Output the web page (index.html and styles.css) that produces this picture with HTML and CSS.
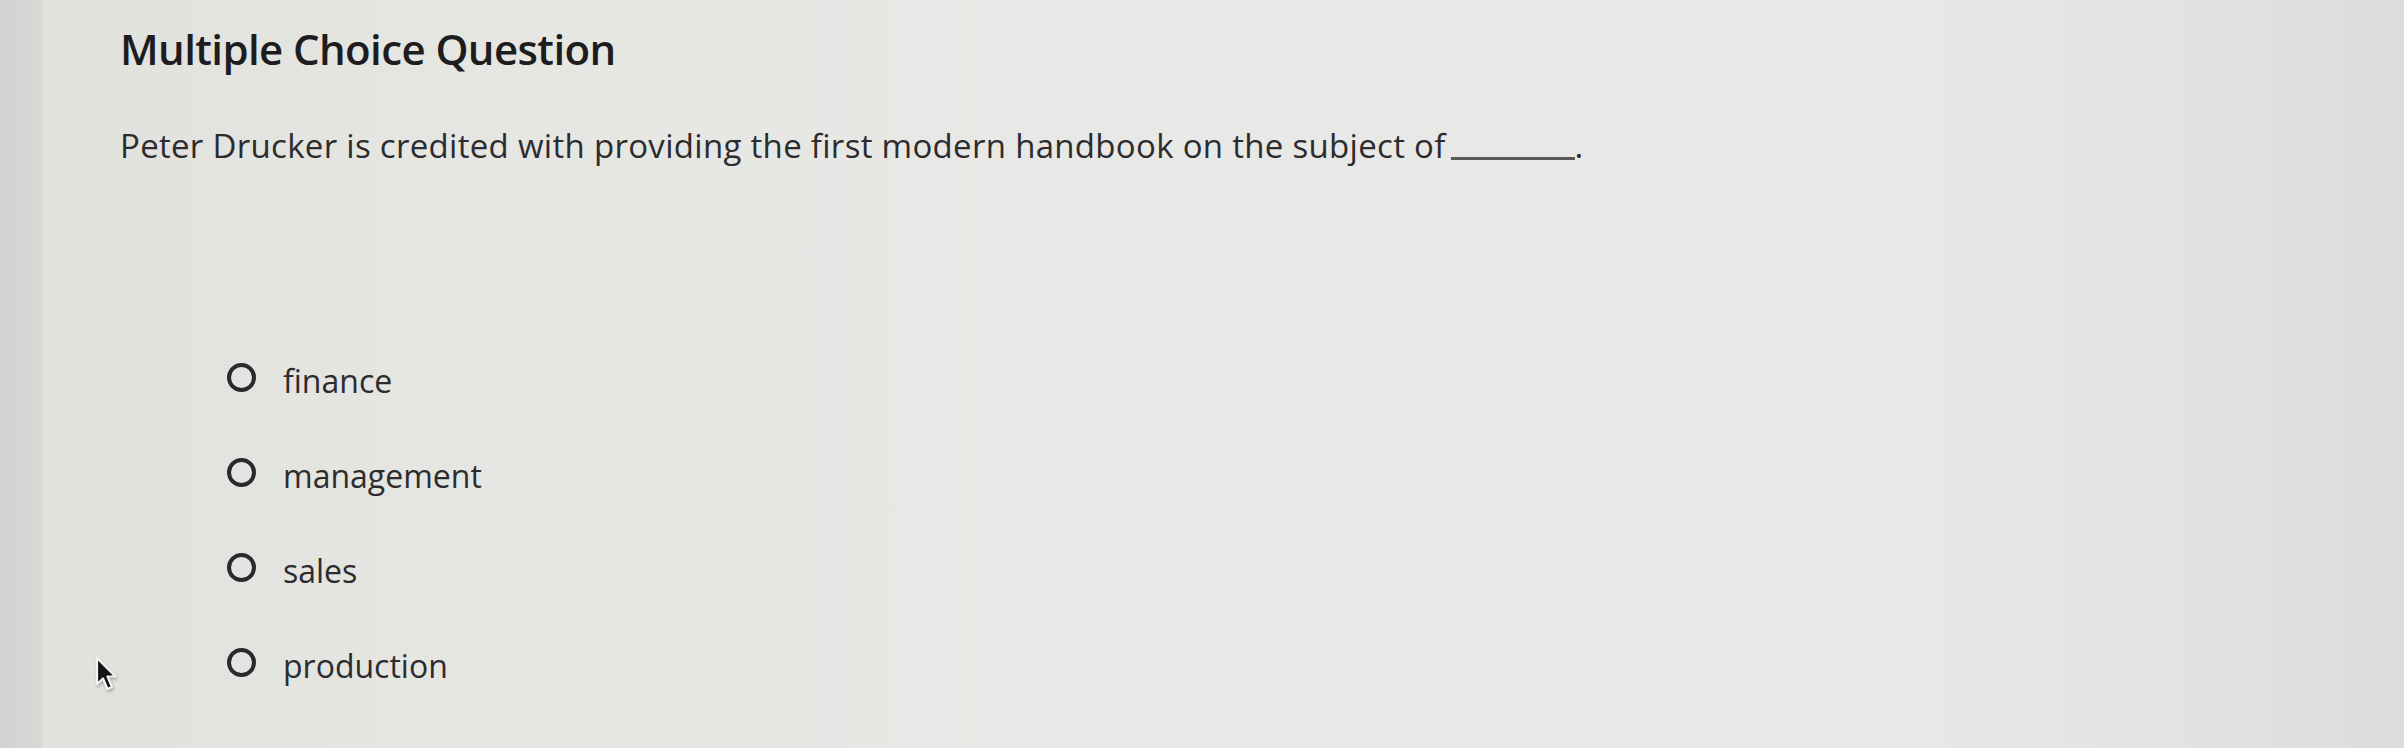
FILE: index.html
```html
<!DOCTYPE html>
<html lang="en">
<head>
<meta charset="utf-8">
<title>Multiple Choice Question</title>
<link rel="stylesheet" href="styles.css">
</head>
<body>
<div class="screen">
  <div class="edge"></div>
  <main class="question">
    <h1 class="title">Multiple Choice Question</h1>
    <p class="prompt">Peter Drucker is credited with providing the first modern handbook on the subject of <span class="blank"></span>.</p>
    <ul class="options">
      <li class="option"><span class="radio"></span><span class="label">finance</span></li>
      <li class="option"><span class="radio"></span><span class="label">management</span></li>
      <li class="option"><span class="radio"></span><span class="label">sales</span></li>
      <li class="option"><span class="radio"></span><span class="label">production</span></li>
    </ul>
  </main>
  <svg class="cursor" width="24" height="38" viewBox="0 0 24 38" aria-hidden="true">
    <path d="M3 3 L3 29 L9 23.5 L13.5 34 L18 32 L13.5 21.5 L21.5 21.5 Z" fill="#151517" stroke="#f4f4f2" stroke-width="2.2" stroke-linejoin="round"/>
  </svg>
</div>
</body>
</html>
```
FILE: styles.css
```css
html, body {
  margin: 0;
  padding: 0;
}
body {
  width: 2404px;
  height: 748px;
  overflow: hidden;
  font-family: "Open Sans", "Liberation Sans", sans-serif;
  color: #2b2b2d;
}
.screen {
  position: relative;
  display: flex;
  width: 2404px;
  height: 748px;
  background: linear-gradient(90deg, #e0e0dd 0px, #e5e5e2 400px, #e8e8e6 1100px, #e8e8e6 1900px, #e2e2e0 2200px, #dcdcda 2404px);
}
.edge {
  width: 42px;
  flex: none;
  background: linear-gradient(90deg, #d2d2d0, #d8d8d6);
}
.question {
  display: flex;
  flex-direction: column;
  padding: 24px 0 0 78px;
}
.title {
  margin: 0;
  font-size: 42px;
  line-height: 50px;
  font-weight: 600;
  color: #1d1d1f;
  letter-spacing: -0.6px;
}
.prompt {
  margin: 52px 0 0;
  font-size: 33px;
  line-height: 40px;
  font-weight: 400;
  color: #2c2c2e;
  letter-spacing: 0.3px;
}
.blank {
  display: inline-block;
  width: 124px;
  height: 0;
  border-bottom: 3px solid #5a5a5c;
  vertical-align: -2px;
  margin-left: -4px;
}
.options {
  list-style: none;
  margin: 195px 0 0;
  padding: 0 0 0 107px;
  display: flex;
  flex-direction: column;
  gap: 55px;
}
.option {
  display: flex;
  align-items: flex-start;
  height: 40px;
}
.radio {
  flex: none;
  width: 21px;
  height: 21px;
  margin-top: 2px;
  border: 4px solid #2a2a2e;
  border-radius: 50%;
}
.label {
  margin-left: 27px;
  font-size: 32px;
  line-height: 40px;
  color: #2c2c2e;
}
.cursor {
  position: absolute;
  left: 94px;
  top: 655px;
  filter: drop-shadow(1px 2px 1.5px rgba(0, 0, 0, 0.25));
}
```
